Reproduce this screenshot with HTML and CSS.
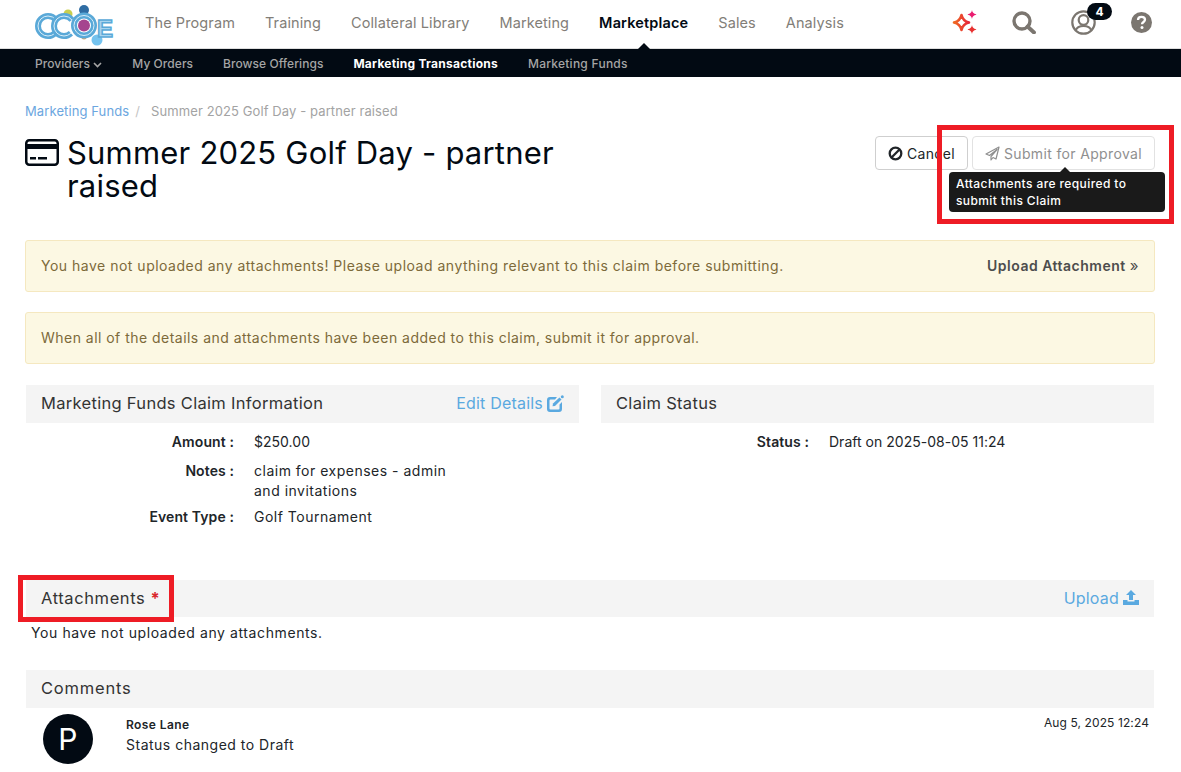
FILE: index.html
```html
<!DOCTYPE html>
<html>
	<head>
		<meta charset="UTF-8">
		<title>Summer 2025 Golf Day - partner raised</title>
		<link rel="stylesheet" href="styles.css">
	</head>

	<body>
		<header class="top_bar">
			<svg class="logo" width="80" height="44" viewBox="0 0 80 44">
				<circle cx="34" cy="12" r="4.500" fill="#c9cf4e"/>
				<circle cx="50" cy="8" r="5" fill="#2f6ca3"/>
				<circle cx="50" cy="35" r="2.500" fill="#d9a56a"/>
				<circle cx="63" cy="38" r="5.500" fill="#74c3ef"/>
				<circle cx="14" cy="24" r="10" fill="none" stroke="#5aa9d8" stroke-width="6" stroke-dasharray="48 15" stroke-dashoffset="-8"/>
				<circle cx="14" cy="24" r="10" fill="none" stroke="#d8edf8" stroke-width="1" stroke-dasharray="48 15" stroke-dashoffset="-8"/>
				<circle cx="30" cy="24" r="10" fill="none" stroke="#5aa9d8" stroke-width="6" stroke-dasharray="48 15" stroke-dashoffset="-8"/>
				<circle cx="30" cy="24" r="10" fill="none" stroke="#d8edf8" stroke-width="1" stroke-dasharray="48 15" stroke-dashoffset="-8"/>
				<circle cx="50" cy="23.500" r="10" fill="#fff" stroke="#5aa9d8" stroke-width="6"/>
				<circle cx="50" cy="23.500" r="10" fill="none" stroke="#d8edf8" stroke-width="1"/>
				<circle cx="50" cy="23.500" r="6" fill="#a5448f"/>
				<text class="logo_e" x="63" y="35">E</text>
			</svg>
			<nav class="main_nav">
				<a href="#">The Program</a>
				<a href="#">Training</a>
				<a href="#">Collateral Library</a>
				<a href="#">Marketing</a>
				<a href="#" class="active">Marketplace</a>
				<a href="#">Sales</a>
				<a href="#">Analysis</a>
			</nav>
			<div class="top_icons">
				<svg width="25" height="25" viewBox="0 0 25 25">
					<defs>
						<linearGradient id="star_grad" x1="0" y1="0" x2="1" y2="0">
							<stop offset="0" stop-color="#ef6a22"/>
							<stop offset="1" stop-color="#e6243a"/>
						</linearGradient>
					</defs>
					<path d="M9.500 5 C10.500 9.500 12.500 11.500 17 12.500 C12.500 13.500 10.500 15.500 9.500 20 C8.500 15.500 6.500 13.500 2 12.500 C6.500 11.500 8.500 9.500 9.500 5 Z" fill="none" stroke="url(#star_grad)" stroke-width="2.600" stroke-linejoin="round"/>
					<path d="M20 0 C20.600 2.700 21.300 3.400 24.500 4.500 C21.300 5.600 20.600 6.300 20 9 C19.400 6.300 18.700 5.600 15.500 4.500 C18.700 3.400 19.400 2.700 20 0 Z" fill="#ea1c6f"/>
					<path d="M20 15 C20.600 17.700 21.300 18.400 24.500 19.500 C21.300 20.600 20.600 21.300 20 24 C19.400 21.300 18.700 20.600 15.500 19.500 C18.700 18.400 19.400 17.700 20 15 Z" fill="#e8302f"/>
				</svg>
				<svg width="24" height="23" viewBox="0 0 24 23">
					<circle cx="10" cy="10" r="8" fill="none" stroke="#7b7670" stroke-width="3.400"/>
					<path d="M15.500 15.500 L22 21.500" stroke="#7b7670" stroke-width="3.800" stroke-linecap="round"/>
				</svg>
				<div class="user_icon">
					<svg width="25" height="25" viewBox="0 0 25 25">
						<circle cx="12.500" cy="12.500" r="11.200" fill="none" stroke="#7b7670" stroke-width="2.200"/>
						<circle cx="12.500" cy="10" r="4.800" fill="none" stroke="#7b7670" stroke-width="2.200"/>
						<path d="M4.500 20.500 C6 16.500 9 16 12.500 16 C16 16 19 16.500 20.500 20.500" fill="none" stroke="#7b7670" stroke-width="2.200"/>
					</svg>
					<span class="badge">4</span>
				</div>
				<svg width="21" height="21" viewBox="0 0 21 21">
					<circle cx="10.500" cy="10.500" r="10.500" fill="#7b7670"/>
					<path d="M7 8 C7 5.800 8.700 4.800 10.500 4.800 C12.500 4.800 14 6 14 7.800 C14 10 11 10 11 12.300" fill="none" stroke="#fff" stroke-width="2.300"/>
					<circle cx="11" cy="15.500" r="1.500" fill="#fff"/>
				</svg>
			</div>
		</header>

		<nav class="sub_nav">
			<a href="#">Providers
				<svg width="9" height="6" viewBox="0 0 9 6"><path d="M1 1 L4.500 4.500 L8 1" fill="none" stroke="currentColor" stroke-width="1.600"/></svg>
			</a>
			<a href="#">My Orders</a>
			<a href="#">Browse Offerings</a>
			<a href="#" class="active">Marketing Transactions</a>
			<a href="#">Marketing Funds</a>
		</nav>

		<main class="content">
			<div class="breadcrumb">
				<a href="#">Marketing Funds</a>
				<span class="sep">/</span>
				<span>Summer 2025 Golf Day - partner raised</span>
			</div>

			<div class="title_row">
				<div class="title_wrap">
					<svg class="title_icon" width="34" height="27" viewBox="0 0 34 27">
						<rect x="1.250" y="1.250" width="31.500" height="24.500" rx="3" fill="none" stroke="#020a13" stroke-width="2.500"/>
						<rect x="1.250" y="5" width="31.500" height="5" fill="#020a13"/>
						<rect x="5" y="18" width="6" height="2.500" fill="#020a13"/>
						<rect x="13" y="18" width="9" height="2.500" fill="#020a13"/>
					</svg>
					<h1>Summer 2025 Golf Day - partner raised</h1>
				</div>
				<div class="title_btns">
					<button class="btn btn_cancel">
						<svg width="15" height="15" viewBox="0 0 15 15"><circle cx="7.500" cy="7.500" r="5.800" fill="none" stroke="#212529" stroke-width="2.300"/><path d="M3.500 11.500 L11.500 3.500" stroke="#212529" stroke-width="2.300"/></svg>
						Cancel
					</button>
					<div class="submit_wrap">
						<button class="btn disabled">
							<svg width="15" height="15" viewBox="0 0 15 15"><path d="M14 1 L1 8 L4.500 9.500 L12 3.500 L6 10.500 L6 14 L8 11.500 L11 13 Z" fill="none" stroke="#8f8f8f" stroke-width="1.200" stroke-linejoin="round"/></svg>
							Submit for Approval
						</button>
						<div class="tooltip">Attachments are required to submit this Claim</div>
					</div>
				</div>
			</div>

			<div class="alert alert_split">
				<span>You have not uploaded any attachments! Please upload anything relevant to this claim before submitting.</span>
				<a href="#">Upload Attachment <b class="raquo">&raquo;</b></a>
			</div>
			<div class="alert alert_last">When all of the details and attachments have been added to this claim, submit it for approval.</div>

			<div class="panels">
				<section>
					<div class="panel_head">
						<h2>Marketing Funds Claim Information</h2>
						<a href="#" class="head_link">Edit Details
							<svg width="17" height="17" viewBox="0 0 17 17">
								<path d="M3 2 H10 L8 4.500 H3.500 Q2.500 4.500 2.500 5.500 V13.500 Q2.500 14.500 3.500 14.500 H11.500 Q12.500 14.500 12.500 13.500 V9.500 L15 7 V14 Q15 17 12 17 H3 Q0 17 0 14 V5 Q0 2 3 2 Z" fill="#5aa9e0"/>
								<path d="M6 8.500 L12.500 2.500 L14.500 4.500 L8 11 L5.500 11.300 Z" fill="#5aa9e0"/>
								<circle cx="15.300" cy="1.700" r="1.500" fill="#5aa9e0"/>
							</svg>
						</a>
					</div>
					<dl class="details">
						<dt class="first">Amount :</dt><dd class="first tight">$250.00</dd>
						<dt>Notes :</dt><dd>claim for expenses - admin and invitations</dd>
						<dt>Event Type :</dt><dd>Golf Tournament</dd>
					</dl>
				</section>
				<section>
					<div class="panel_head">
						<h2>Claim Status</h2>
					</div>
					<dl class="details">
						<dt>Status :</dt><dd class="wide tight">Draft on 2025-08-05 11:24</dd>
					</dl>
				</section>
			</div>

			<div class="panel_head attach_head">
				<h2>Attachments <span class="req">*</span></h2>
				<a href="#" class="head_link">Upload
					<svg width="16" height="15" viewBox="0 0 16 15">
						<path d="M8 0 L13 5 H10 V10 H6 V5 H3 Z" fill="#5aa9e0"/>
						<path d="M0 10 H4.500 V11.500 H11.500 V10 H16 V15 H0 Z" fill="#5aa9e0"/>
					</svg>
				</a>
			</div>
			<p class="no_files">You have not uploaded any attachments.</p>

			<div class="panel_head comments_head">
				<h2>Comments</h2>
			</div>
			<div class="comment">
				<div class="avatar">P</div>
				<div class="comment_body">
					<strong>Rose Lane</strong>
					<p>Status changed to Draft</p>
				</div>
				<time>Aug 5, 2025 12:24</time>
			</div>
		</main>

		<!-- red annotations sit on top of the page -->
		<div class="mark mark_submit"></div>
		<div class="mark mark_attach"></div>
	</body>
</html>
```

FILE: styles.css
```css
* {
	margin: 0;
	padding: 0;
	box-sizing: border-box;
}

body {
	position: relative;
	height: 772px;
	overflow: hidden;
	background: #fff;
	color: #212529;
	font-family: "Inter", "Noto Sans", sans-serif;
	font-size: 14px;
	letter-spacing: 0.5px;
}

a {
	text-decoration: none;
}

.top_bar {
	display: flex;
	align-items: center;
	height: 49px;
	padding: 0 29px 0 34px;
	border-bottom: 1px solid #dedede;
}

.logo {
	flex: none;
	margin-right: 31px;
}

.logo_e {
	font-family: "Liberation Sans", sans-serif;
	font-size: 24px;
	font-weight: bold;
	letter-spacing: 0;
	fill: #a9d4ee;
	stroke: #5aa9d8;
	stroke-width: 1.500;
}

.main_nav {
	display: flex;
	gap: 30px;
	margin-bottom: 4px;
}

.main_nav a {
	position: relative;
	color: #827e78;
	font-size: 14.500px;
	letter-spacing: 0.1px;
	line-height: 45px;
}

.main_nav a.active {
	color: #020a13;
	font-weight: 600;
	letter-spacing: 0.15px;
}

.main_nav a.active::after {
	content: "";
	position: absolute;
	left: 50%;
	bottom: -5px;
	margin-left: -7px;
	border: 7px solid transparent;
	border-top: 0;
	border-bottom-color: #020a13;
}

.top_icons {
	display: flex;
	align-items: center;
	gap: 35px;
	margin-bottom: 3px;
	margin-left: auto;
}

.user_icon {
	position: relative;
	display: flex;
}

.badge {
	position: absolute;
	top: -7px;
	left: 16px;
	width: 25px;
	height: 17px;
	border-radius: 9px;
	background: #020a13;
	color: #fff;
	font-size: 12px;
	font-weight: 700;
	letter-spacing: 0;
	line-height: 17px;
	text-align: center;
}

.sub_nav {
	display: flex;
	gap: 30px;
	height: 28px;
	padding-left: 35px;
	background: #020a13;
}

.sub_nav a {
	color: #a5a5a5;
	font-size: 12px;
	font-weight: 500;
	letter-spacing: 0.05px;
	line-height: 29px;
}

.sub_nav a.active {
	color: #fff;
	font-weight: 700;
	letter-spacing: 0.25px;
}

.sub_nav a:last-child {
	letter-spacing: 0.25px;
}

.content {
	padding: 25px 26px 0 26px;
}

.breadcrumb {
	display: flex;
	gap: 6px;
	margin-left: -1px;
	color: #a3a3a3;
	font-size: 13px;
	letter-spacing: 0.1px;
	line-height: 18px;
}

.breadcrumb a {
	color: #6ba6e0;
}

.breadcrumb .sep {
	margin-right: 5px;
	color: #c4c4c4;
}

.title_row {
	display: flex;
	justify-content: space-between;
	height: 120px;
	padding-top: 16px;
}

.title_wrap {
	display: flex;
	gap: 8px;
	width: 560px;
}

.title_icon {
	flex: none;
	margin-top: 3px;
	margin-left: -1px;
}

h1 {
	color: #020a13;
	font-size: 31px;
	font-weight: 400;
	letter-spacing: 0.2px;
	line-height: 33px;
}

.title_btns {
	display: flex;
	align-items: flex-start;
	gap: 4px;
}

.btn {
	display: flex;
	align-items: center;
	gap: 4px;
	height: 34px;
	padding: 0 12px;
	border: 1px solid #cfcfcf;
	border-radius: 4px;
	background: #fff;
	color: #212529;
	font-family: inherit;
	font-size: 14px;
	letter-spacing: 0.35px;
}

.btn_cancel {
	letter-spacing: 0.35px;
}

.btn.disabled {
	border-color: #e2e2e2;
	color: #8f8f8f;
}

.submit_wrap {
	position: relative;
}

.tooltip {
	position: absolute;
	top: 36px;
	right: -10px;
	width: 216px;
	padding: 3px 25px 3px 7px;
	border-radius: 4px;
	background: #1a1a1a;
	color: #fff;
	font-size: 12px;
	font-weight: 500;
	letter-spacing: 0.4px;
	line-height: 17px;
}

.tooltip::before {
	content: "";
	position: absolute;
	top: -5px;
	left: 111px;
	border: 5px solid transparent;
	border-top: 0;
	border-bottom-color: #1a1a1a;
}

.alert {
	display: flex;
	align-items: center;
	height: 52px;
	margin: 0 0 20px -1px;
	padding: 0 15px 2px;
	border: 1px solid #f5e8c0;
	border-radius: 3px;
	background: #fcf8e3;
	color: #7d6a3a;
	font-size: 14px;
}

.alert_last {
	margin-bottom: 21px;
	letter-spacing: 0.47px;
}

.alert_split {
	justify-content: space-between;
}

.alert a {
	color: #4d4d4d;
	font-weight: 600;
	letter-spacing: 0.5px;
}

.raquo {
	font-size: 15px;
	font-weight: 400;
}

.panels {
	display: grid;
	grid-template-columns: 553px 553px;
	gap: 22px;
	height: 195px;
}

.panel_head {
	display: flex;
	align-items: center;
	justify-content: space-between;
	height: 38px;
	padding: 0 15px 2px;
	background: #f4f4f4;
}

h2 {
	color: #333;
	font-size: 16.500px;
	font-weight: 400;
	letter-spacing: 0.3px;
}

.head_link {
	display: flex;
	align-items: center;
	gap: 4px;
	color: #5aa9e0;
	font-size: 16px;
	letter-spacing: 0.2px;
}

.details {
	display: grid;
	grid-template-columns: 208px 200px;
	column-gap: 20px;
	row-gap: 6px;
	padding-top: 9px;
	font-size: 14px;
	line-height: 20px;
}

.details dt {
	font-weight: 600;
	letter-spacing: 0.1px;
	text-align: right;
}

.details .first {
	padding-bottom: 3px;
}

.details dd.wide {
	width: 300px;
}

.details dd.tight {
	letter-spacing: 0.02px;
}

.attach_head {
	height: 37px;
	margin-right: 1px;
}

.attach_head h2 {
	letter-spacing: 0.6px;
}

.req {
	color: #d9262c;
	font-weight: 700;
}

.no_files {
	height: 53px;
	padding: 7px 0 0 5px;
	font-size: 14px;
	letter-spacing: 0.6px;
	line-height: 18px;
}

.comments_head {
	margin-right: 1px;
}

.comments_head h2 {
	letter-spacing: 0.8px;
}

.comment {
	display: flex;
	padding: 6px 6px 0 17px;
}

.avatar {
	flex: none;
	width: 50px;
	height: 50px;
	margin-right: 33px;
	border-radius: 50%;
	background: #020a13;
	color: #fff;
	font-size: 30px;
	line-height: 50px;
	text-align: center;
}

.comment_body {
	flex: 1;
	font-size: 14px;
	line-height: 20px;
}

.comment_body strong {
	display: block;
	font-size: 12px;
	font-weight: 600;
	line-height: 21px;
	letter-spacing: 0.4px;
}

.comment time {
	font-size: 12px;
	letter-spacing: 0.1px;
	line-height: 18px;
}

.mark {
	position: absolute;
	border: 5px solid #ee1c25;
}

.mark_submit {
	left: 937px;
	top: 125px;
	width: 237px;
	height: 99px;
}

.mark_attach {
	left: 18px;
	top: 575px;
	width: 156px;
	height: 47px;
}
```
